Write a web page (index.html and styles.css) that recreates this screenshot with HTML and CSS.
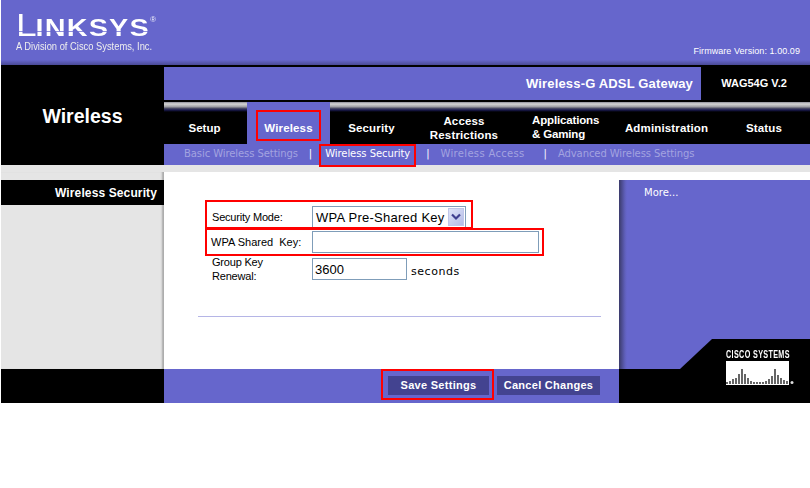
FILE: index.html
```html
<!DOCTYPE html>
<html lang="en">
<head>
<meta charset="utf-8">
<title>Wireless Security</title>
<link rel="stylesheet" href="styles.css">
</head>
<body>
<div class="page">
  <header class="brand">
    <div class="logo">
      <div class="wordmark"><span class="cap">L</span>INKSYS<sup class="reg">®</sup></div>
      <div class="division">A Division of Cisco Systems, Inc.</div>
    </div>
    <div class="firmware">Firmware Version: 1.00.09</div>
  </header>

  <section class="masthead">
    <h1 class="section-title">Wireless</h1>
    <div class="nav-area">
      <div class="product">
        <div class="product-name">Wireless-G ADSL Gateway</div>
        <div class="product-model">WAG54G V.2</div>
      </div>
      <nav class="tabs">
        <a class="tab">Setup</a>
        <a class="tab tab-active">Wireless</a>
        <a class="tab">Security</a>
        <a class="tab">Access<br>Restrictions</a>
        <a class="tab tab-apps">Applications<br>&amp; Gaming</a>
        <a class="tab">Administration</a>
        <a class="tab">Status</a>
      </nav>
      <div class="subnav">
        <a class="sub sub-basic">Basic Wireless Settings</a>
        <span class="sep sep-1">|</span>
        <a class="sub sub-active">Wireless Security</a>
        <span class="sep sep-2">|</span>
        <a class="sub sub-access">Wireless Access</a>
        <span class="sep sep-3">|</span>
        <a class="sub sub-advanced">Advanced Wireless Settings</a>
      </div>
    </div>
  </section>

  <div class="band"></div>

  <main class="content">
    <aside class="side-left">
      <div class="side-title">Wireless Security</div>
    </aside>
    <section class="form-area">
      <div class="form-rows">
        <div class="row row-mode">
          <label class="label">Security Mode:</label>
          <div class="select">
            <span class="select-text">WPA Pre-Shared Key</span>
            <span class="select-btn">
              <svg width="12" height="8" viewBox="0 0 12 8"><path d="M2 1.5 6 5.5 10 1.5" fill="none" stroke="#3f3f8f" stroke-width="2.2"/></svg>
            </span>
          </div>
        </div>
        <div class="row row-key">
          <label class="label label-key">WPA Shared&nbsp; Key:</label>
          <input class="field field-key" type="text">
        </div>
        <div class="row row-renew">
          <label class="label">Group Key<br>Renewal:</label>
          <input class="field field-renew" type="text" value="3600">
          <span class="unit">seconds</span>
        </div>
      </div>
      <div class="divider"></div>
    </section>
    <aside class="side-right">
      <div class="more">More...</div>
      <svg class="chamfer" width="130" height="30" viewBox="0 0 130 30"><path d="M0 30 32 0H130V30Z" fill="#000"/></svg>
    </aside>
  </main>

  <footer class="actions">
    <div class="foot-left"></div>
    <div class="foot-mid">
      <button class="btn btn-save">Save Settings</button>
      <button class="btn btn-cancel">Cancel Changes</button>
    </div>
    <div class="foot-right"></div>
  </footer>

  <div class="cisco">
    <div class="cisco-name">CISCO SYSTEMS</div>
    <svg class="cisco-bars" width="70" height="24" viewBox="0 0 70 24">
      <rect width="63" height="24" fill="#fff"/>
      <path d="M1 23v-2M4 23v-3M7 23v-5M10 23v-6M13 23v-10M16 23v-15M19 23v-10M22 23v-6M25 23v-3M28 23v-2M31 23v-2M34 23v-2M37 23v-2M40 23v-3M43 23v-5M46 23v-8M49 23v-15M52 23v-9M55 23v-6M58 23v-4M61 23v-3" stroke="#000" stroke-width="1.2" fill="none"/>
      <circle cx="66" cy="21.5" r="1.5" fill="#ddd"/>
    </svg>
  </div>

  <div class="mark mark-tab"></div>
  <div class="mark mark-sub"></div>
  <div class="mark mark-mode"></div>
  <div class="mark mark-key"></div>
  <div class="mark mark-save"></div>
</div>
</body>
</html>
```

FILE: styles.css
```css
* { box-sizing: border-box; }
html, body { margin: 0; padding: 0; background: #fff; }
body { font-family: "Liberation Sans", Arial, sans-serif; }
.page { position: relative; width: 810px; height: 488px; padding-left: 1px; overflow: hidden; }

.brand {
  height: 65px; display: flex; justify-content: space-between; align-items: flex-end;
  background: linear-gradient(#6666cc 0, #6666cc 60px, #4a4a96 65px); color: #fff;
  padding: 0 10px 8px 15px; position: relative;
}
.logo { align-self: flex-start; padding-top: 13px; }
.wordmark {
  font-weight: 700; font-size: 24px; line-height: 26px; height: 26px; width: 118px;
  letter-spacing: 1px; transform: scaleX(1.2); transform-origin: left center; white-space: nowrap;
  color: transparent; -webkit-background-clip: text; background-clip: text;
  background-image: linear-gradient(#fff 0, #fff 18px, #8f8fdc 18px, #8f8fdc 19px, #fff 19px);
}
.cap { font-size: 31px; font-weight: 400; letter-spacing: -1px; }
.reg { font-size: 7px; font-weight: 400; vertical-align: 14px; line-height: 0; letter-spacing: 0; }
.division { font-size: 11px; line-height: 13px; margin-top: 1px; transform: scaleX(.85); transform-origin: left center; white-space: nowrap; color: #eee; }
.firmware { font-size: 9px; line-height: 11px; letter-spacing: .06px; }

.masthead { height: 100px; background: #000; display: grid; grid-template-columns: 163px 1fr; }
.section-title { margin: 0; color: #fff; font-size: 19.5px; font-weight: 700; text-align: center; padding-top: 39px; line-height: 25px; padding-right: 0; }
.nav-area { display: flex; flex-direction: column; padding-top: 2px; }
.product { height: 33px; display: grid; grid-template-columns: 537px 1fr; }
.product-name { background: #6666cc; color: #fff; font-weight: 700; font-size: 13px; line-height: 33px; text-align: right; padding-right: 8px; letter-spacing: .17px; }
.product-model { color: #fff; font-weight: 700; font-size: 11px; line-height: 33px; text-align: center; padding-right: 3px; }
.tabs {
  margin-top: 2px; height: 42px; padding-top: 10px; display: grid; grid-template-columns: 83px 83px 83px 102px 102px 99px 94px;
  background: linear-gradient(#8f8f9a 0, #d5d5d5 2px, #9a9aa0 5px, #55556a 6px, #1a1a50 8px, #000 10px) top/100% 10px no-repeat #000;
}
.tab { color: #fff; font-weight: 700; font-size: 11.5px; line-height: 14px; text-align: center; display: flex; align-items: center; justify-content: center; padding-bottom: 1px; letter-spacing: .15px; }
.tab:first-child { padding-right: 2px; letter-spacing: 0; }
.tab:last-child { padding-left: 2px; }
.tab-active { background: #6666cc; margin-top: -10px; padding-top: 10px; }
.tab-apps { display: block; text-align: left; padding: 1px 0 0 17px; letter-spacing: -.15px; }
.subnav {
  height: 21px; background: #6666cc; color: #a3a3e0; font-family: "DejaVu Sans", sans-serif; font-size: 10px; line-height: 20px;
  display: flex; padding-left: 20px; white-space: nowrap; letter-spacing: -.08px;
}
.sep { color: #fff; font-size: 10px; }
.sep-1 { margin-left: 11px; }
.sub-active { color: #fff; margin-left: 13px; letter-spacing: -.06px; }
.sep-2 { margin-left: 16px; }
.sub-access { margin-left: 11px; letter-spacing: .32px; }
.sep-3 { margin-left: 19px; }
.sub-advanced { margin-left: 11px; }

.band { height: 7px; background: #e5e5e5; }

.content { height: 197px; display: grid; grid-template-columns: 163px 455px 191px; }
.side-left { background: #e5e5e5; padding-top: 8px; box-shadow: inset -3px 0 2px -1px #aaa; }
.side-title { height: 25px; background: #000; color: #fff; font-weight: 700; font-size: 12px; line-height: 26px; text-align: right; padding-right: 7px; letter-spacing: .12px; }
.form-area { background: #fff; padding: 34px 18px 0 34px; }
.form-rows { display: flex; flex-direction: column; }
.row { display: flex; align-items: center; }
.label { width: 114px; font-size: 11px; line-height: 14px; color: #000; padding-left: 14px; flex: none; letter-spacing: -.2px; }
.label-key { padding-left: 13px; letter-spacing: 0; }
.row-mode { height: 22px; }
.row-key { height: 22px; margin-top: 3px; }
.row-renew { height: 22px; margin-top: 5px; }
.select { width: 154px; height: 22px; border: 1px solid #7f9db9; display: flex; align-items: center; justify-content: space-between; padding: 0 1px 0 3px; }
.select-text { font-size: 13px; letter-spacing: .25px; white-space: nowrap; }
.select-btn { width: 16px; height: 18px; background: linear-gradient(135deg, #dfe4f8, #b4bbe6); border: 1px solid #c0c6ea; display: flex; align-items: center; justify-content: center; }
.field { height: 22px; border: 1px solid #7f9db9; padding: 0 2px; font-family: "Liberation Sans", sans-serif; font-size: 13px; background: #fff; color: #000; border-radius: 0; outline: 0; }
.field-key { width: 227px; }
.field-renew { width: 95px; }
.unit { font-family: "DejaVu Sans", sans-serif; font-size: 11px; margin-left: 4px; letter-spacing: .55px; padding-top: 5px; }
.divider { height: 1px; background: #b5b5e6; margin-top: 36px; }

.side-right { position: relative; background: #fff; }
.side-right::before { content: ""; position: absolute; left: 0; right: 0; top: 8px; bottom: 0; background: linear-gradient(90deg, #3a3a6a 0, #6060bb 6px, #6666cc 8px); }
.more { position: absolute; left: 25px; top: 14px; color: #fff; font-family: "DejaVu Sans", sans-serif; font-size: 10px; line-height: 13px; }
.chamfer { position: absolute; right: 0; bottom: 0; display: block; }

.actions { height: 34px; display: grid; grid-template-columns: 163px 455px 191px; }
.foot-left, .foot-right { background: #000; }
.foot-mid { background: #6666cc; display: flex; gap: 8px; padding: 7px 0 0 224px; align-items: flex-start; }
.btn { height: 19px; border: 0; padding: 0; background: #434390; color: #fff; font-family: "Liberation Sans", sans-serif; font-weight: 700; font-size: 11px; letter-spacing: .28px; line-height: 19px; }
.btn-save { width: 101px; }
.btn-cancel { width: 103px; }

.cisco { position: absolute; left: 726px; top: 349px; color: #fff; }
.cisco-name { font-size: 10px; font-weight: 700; line-height: 11px; white-space: nowrap; transform: scaleX(.72); transform-origin: left center; width: 90px; letter-spacing: .5px; }
.cisco-bars { display: block; margin-top: 1px; }

.mark { position: absolute; border: 2px solid #f00; pointer-events: none; }
.mark-tab { left: 256px; top: 110px; width: 65px; height: 31px; }
.mark-sub { left: 319px; top: 144px; width: 97px; height: 23px; }
.mark-mode { left: 205px; top: 200px; width: 268px; height: 29px; }
.mark-key { left: 205px; top: 228px; width: 339px; height: 28px; }
.mark-save { left: 381px; top: 369px; width: 113px; height: 31px; }
```
